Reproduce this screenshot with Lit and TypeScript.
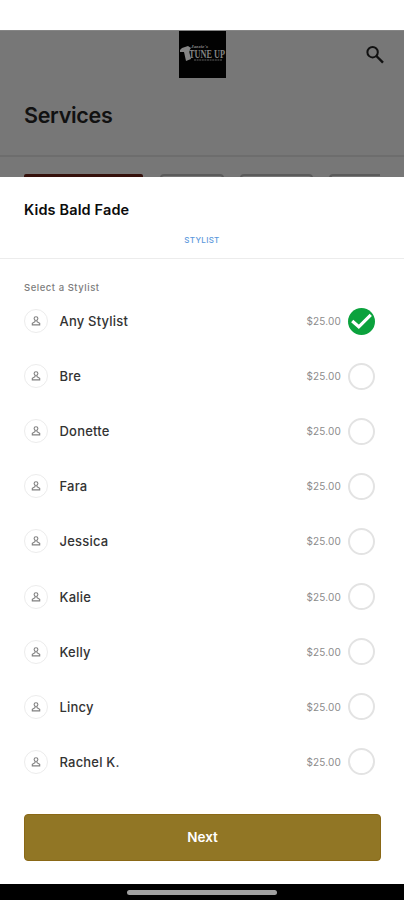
import { LitElement, html, css } from "lit";
import { customElement, property, state } from "lit/decorators.js";
import { classMap } from "lit/directives/class-map.js";

@customElement("shop-logo")
class ShopLogo extends LitElement {
  static styles = css`
    :host { display: block; width: 47px; height: 47px; background: #020202; }
    svg { display: block; overflow: visible; }
    text { font-family: "Liberation Serif", serif; font-weight: 700; fill: #858585; }
    .script { font-style: italic; }
  `;
  render() {
    return html`<svg width="47" height="47" viewBox="0 0 47 47">
      <path d="M1 19L3 17L9 15L12 17L10 20L12 28L7 30L5 21L1 21Z" fill="#858585" />
      <text class="script" x="12" y="17" font-size="4" textLength="17" lengthAdjust="spacingAndGlyphs">Jazzie's</text>
      <text x="10" y="27" font-size="12" textLength="36" lengthAdjust="spacingAndGlyphs">TUNE UP</text>
      <path d="M15 29H43" stroke="#5c5c5c" stroke-width="1.2" stroke-dasharray="2 .6" />
    </svg>`;
  }
}

@customElement("stylist-row")
class StylistRow extends LitElement {
  @property() name = "";
  @property() price = "";
  @property({ type: Boolean }) selected = false;

  static styles = css`
    :host { display: flex; align-items: center; height: 55.1px; }
    .avatar {
      box-sizing: border-box; width: 24px; height: 24px; border: 1px solid #ececec;
      border-radius: 50%; display: grid; place-items: center; margin-right: 11.5px;
    }
    .name { flex: 1; font-size: 13px; font-weight: 500; letter-spacing: 0.2px; color: #333; }
    .price { font-size: 10px; letter-spacing: 0.15px; color: #8c8c8c; margin-right: 7px; }
    .mark { box-sizing: border-box; width: 27px; height: 27px; border-radius: 50%; border: 2px solid #e3e3e3; }
    .mark.on { border: 0; background: #0ba23d; }
    svg { display: block; }
  `;
  render() {
    return html`
      <span class="avatar">
        <svg width="12" height="12" viewBox="0 0 12 12" fill="none" stroke="#808080" stroke-width="1.1">
          <circle cx="6" cy="3.6" r="1.9" />
          <path d="M5 5.4V6.6L2.3 8.4V9.9H9.7V8.4L7 6.6V5.4" />
        </svg>
      </span>
      <span class="name">${this.name}</span>
      <span class="price">${this.price}</span>
      <span class=${classMap({ mark: true, on: this.selected })}>
        ${this.selected
          ? html`<svg width="27" height="27" viewBox="0 0 27 27" fill="none" stroke="#fff" stroke-width="3.2">
              <path d="M4.2 13L10.8 18.8L22.8 6.8" />
            </svg>`
          : ""}
      </span>
    `;
  }
}

@customElement("app-root")
class AppRoot extends LitElement {
  @state() private selected = "Any Stylist";
  private names = ["Any Stylist", "Bre", "Donette", "Fara", "Jessica", "Kalie", "Kelly", "Lincy", "Rachel K."];

  static styles = css`
    :host {
      display: flex; flex-direction: column; width: 404px; height: 900px; overflow: hidden;
      background: #fff; font-family: Inter, sans-serif; color: #0b0b0b;
    }
    * { box-sizing: border-box; }
    .status { height: 30px; flex: none; }
    .page { height: 147px; flex: none; background: #777; overflow: hidden; border-top: 1px solid #858585; }
    .top { display: grid; grid-template-columns: 1fr 47px 1fr; height: 47px; align-items: center; }
    .top shop-logo { grid-column: 2; }
    .search { justify-self: end; margin-right: 19px; display: block; }
    h1 {
      margin: 0; height: 77px; padding: 23px 24px 0; font-size: 21.5px; line-height: 28px;
      font-weight: 600; letter-spacing: -0.3px; color: #111;
    }
    .chips { display: flex; gap: 16px; padding: 17px 0 0 24px; border-top: 2px solid #6d6d6d; }
    .chip { flex: none; height: 30px; border: 2px solid #5b5b5b; border-radius: 4px; }
    .chip.active { width: 119px; background: #35100b; border-color: #35100b; border-radius: 2px; margin-right: 1px; }
    .w64 { width: 64px; }
    .w73 { width: 73px; }
    .last { width: 51px; border-right: 0; border-radius: 4px 0 0 4px; }
    .sheet { flex: 1; display: flex; flex-direction: column; }
    h2 {
      margin: 0; padding: 23px 24px 0; height: 54px; font-size: 14.5px; line-height: 20px;
      font-weight: 600; letter-spacing: 0.14px; color: #0b0b0b;
    }
    .tab {
      height: 28px; padding-top: 3px; text-align: center; font-size: 8px; line-height: 12px;
      font-weight: 500; letter-spacing: 0.3px; color: #5b98dc; border-bottom: 1px solid #ececec;
    }
    .label {
      padding: 23px 24px 0; height: 34.5px; font-size: 9.5px; line-height: 12px;
      font-weight: 500; letter-spacing: 0.53px; color: #7c7c7c;
    }
    .list { padding: 0 29px 0 24px; }
    .next {
      margin: 25px 23px 0 24px; height: 47px; flex: none; border: 1px solid #8a6816; border-radius: 4px;
      background: #917625; color: #fff; font: 600 13.5px Inter, sans-serif; padding: 0 0 2px;
    }
    .home { height: 16px; flex: none; background: #000; display: grid; place-items: center; }
    .pill { width: 150px; height: 5px; border-radius: 2.5px; background: #a0a0a0; margin-top: 1px; }
  `;

  render() {
    return html`
      <div class="status"></div>
      <div class="page">
        <div class="top">
          <shop-logo></shop-logo>
          <svg class="search" width="20" height="20" viewBox="0 0 20 20" fill="none" stroke="#111" stroke-width="2">
            <circle cx="7.6" cy="7.2" r="5.2" />
            <path d="M11.4 11L18 17.6" stroke-width="2.4" />
          </svg>
        </div>
        <h1>Services</h1>
        <div class="chips">
          <div class="chip active"></div>
          <div class="chip w64"></div>
          <div class="chip w73"></div>
          <div class="chip last"></div>
        </div>
      </div>
      <div class="sheet">
        <h2>Kids Bald Fade</h2>
        <div class="tab">STYLIST</div>
        <div class="label">Select a Stylist</div>
        <div class="list">
          ${this.names.map(
            (n) => html`<stylist-row
              .name=${n}
              .price=${"$25.00"}
              .selected=${n === this.selected}
              @click=${() => (this.selected = n)}
            ></stylist-row>`
          )}
        </div>
        <button class="next">Next</button>
      </div>
      <div class="home"><div class="pill"></div></div>
    `;
  }
}
